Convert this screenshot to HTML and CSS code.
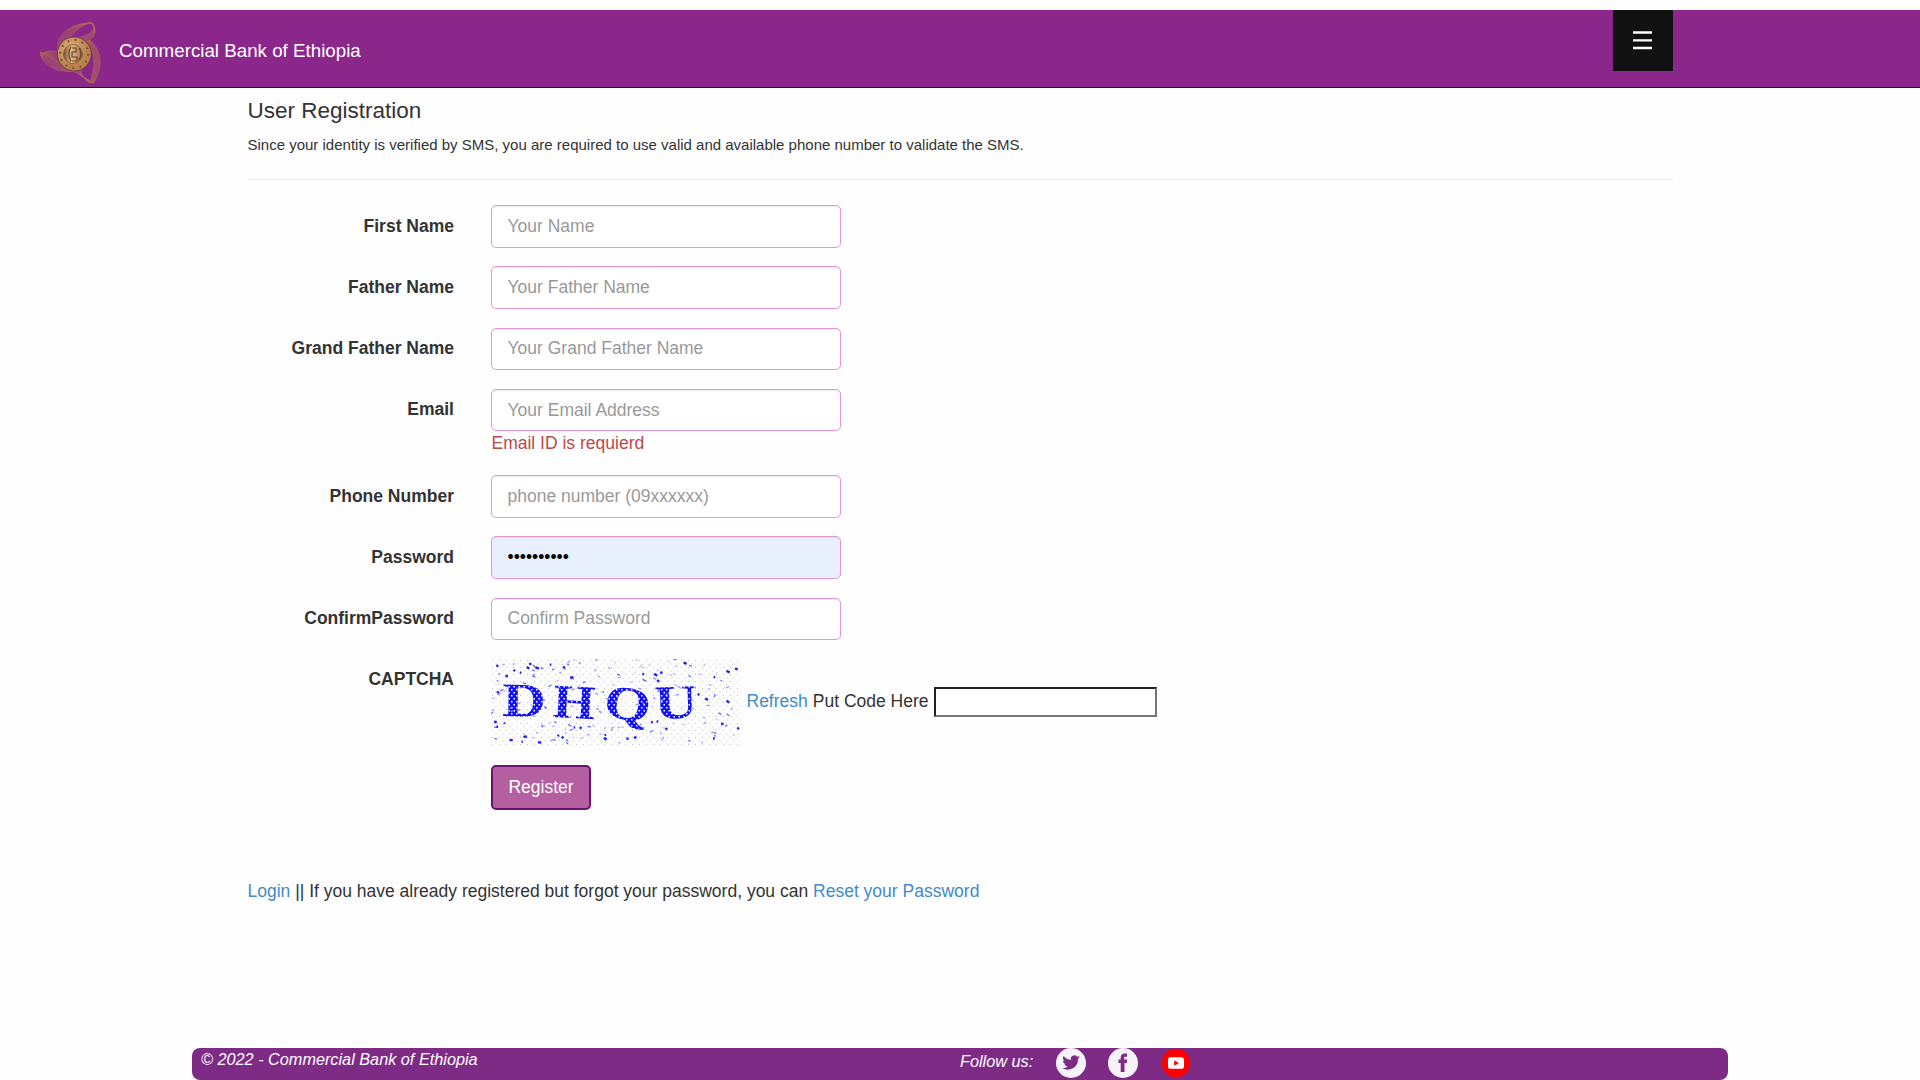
FILE: index.html
```html
<!DOCTYPE html>
<html lang="en">
<head>
<meta charset="utf-8">
<title>User Registration</title>
<link rel="stylesheet" href="styles.css">
</head>
<body>
<header class="navbar">
  <svg class="logo" viewBox="0 0 62 62" aria-hidden="true">
    <defs>
      <radialGradient id="gold" cx=".4" cy=".35"><stop offset="0" stop-color="#e0b47e"/><stop offset="1" stop-color="#b9814c"/></radialGradient>
      <linearGradient id="relief"><stop offset="0" stop-color="#6f4c34"/><stop offset=".4" stop-color="#e5bd87"/><stop offset="1" stop-color="#a36e43"/></linearGradient>
    </defs>
    <g id="petals" fill="none" stroke="#b9774f" stroke-width=".5" opacity=".8"></g>
    <circle cx="35.300" cy="32" r="17" fill="url(#gold)" stroke="#5f3540" stroke-width=".8"/>
    <circle cx="35.300" cy="32" r="14" fill="none" stroke="#7d5335" stroke-width="2.200" stroke-dasharray="1.800 5.530"/>
    <circle cx="34" cy="32" r="9.500" fill="url(#relief)" stroke="#805536" stroke-width=".8"/>
    <path d="M32 24.500q-4 7 0 15M33 26h4v4h-4v5h5v4h-5M40 26q4 6 0 12" fill="none" stroke="#63422d" stroke-width="1.200"/>
  </svg>
  <span class="brand">Commercial Bank of Ethiopia</span>
  <button class="menu" aria-label="Menu"><svg width="19" height="19" viewBox="0 0 19 19"><path d="M0 1.500h19M0 9.300h19M0 17h19" stroke="#fff" stroke-width="2.300"/></svg></button>
</header>
<main class="container">
  <h4 class="title">User Registration</h4>
  <p class="intro">Since your identity is verified by SMS, you are required to use valid and available phone number to validate the SMS.</p>
  <form class="form">
    <div class="row"><label class="label">First Name</label><input class="control" placeholder="Your Name"></div>
    <div class="row"><label class="label">Father Name</label><input class="control" placeholder="Your Father Name"></div>
    <div class="row"><label class="label">Grand Father Name</label><input class="control" placeholder="Your Grand Father Name"></div>
    <div class="row"><label class="label">Email</label><div class="field"><input class="control" placeholder="Your Email Address"><span class="error">Email ID is requierd</span></div></div>
    <div class="row"><label class="label">Phone Number</label><input class="control" placeholder="phone number (09xxxxxx)"></div>
    <div class="row"><label class="label">Password</label><input class="control filled" type="password" value="abcdefghij"></div>
    <div class="row"><label class="label">ConfirmPassword</label><input class="control" type="password" placeholder="Confirm Password"></div>
    <div class="row captcha-row"><label class="label">CAPTCHA</label>
      <div class="captcha">
        <svg class="captcha-image" width="250" height="87" viewBox="0 0 250 87">
          <defs>
            <pattern id="mesh" width="7" height="7" patternUnits="userSpaceOnUse"><path d="M1 1h1v1H1zM4.500 4.500h1v1h-1z" fill="#bfc5bf"/></pattern>
            <pattern id="holes" width="5" height="6" patternUnits="userSpaceOnUse"><path d="M0 0h1.500v1.500H0zM2.500 3h1.500v1.500H2.500z" fill="#fff"/></pattern>
          </defs>
          <rect width="250" height="87" fill="#fdfdfd"/>
          <rect width="250" height="87" fill="url(#mesh)"/>
          <g class="code">
            <text transform="translate(11 57) rotate(1) scale(1.260 1)">D</text>
            <text transform="translate(61 58) rotate(3) scale(1.140 1)">H</text>
            <text transform="translate(111 57) rotate(9) scale(1.260 1)">Q</text>
            <text transform="translate(164 60) rotate(-2) scale(1.240 1)">U</text>
          </g>
          <rect x="10" y="24" width="200" height="48" fill="url(#holes)"/>
          <g id="specks"></g>
        </svg>
        <div class="captcha-entry">
          <a class="link">Refresh</a>
          <span>Put Code Here</span>
        </div>
        <input class="code-input">
      </div>
    </div>
    <div class="row actions"><span class="label"></span><button class="register" type="button">Register</button></div>
  </form>
  <p class="help"><a class="link">Login</a> || If you have already registered but forgot your password, you can <a class="link">Reset your Password</a></p>
</main>
<footer class="footer">
  <span class="copyright">© 2022 - Commercial Bank of Ethiopia</span>
  <div class="social">
    <span class="follow">Follow us:</span>
    <svg class="icon" viewBox="0 0 30 30"><circle cx="15" cy="15" r="15" fill="#f5f3f7"/><path transform="translate(6.300 5.800) scale(.73)" fill="#7e2b86" d="M24 4.600a10 10 0 0 1-2.800.8 5 5 0 0 0 2.100-2.700 10 10 0 0 1-3.100 1.200 4.900 4.900 0 0 0-8.400 4.500A14 14 0 0 1 1.700 3.100a4.900 4.900 0 0 0 1.500 6.600 5 5 0 0 1-2.200-.6 4.900 4.900 0 0 0 3.900 4.900 5 5 0 0 1-2.200.1 4.900 4.900 0 0 0 4.600 3.400A9.900 9.900 0 0 1 0 19.500a14 14 0 0 0 21.500-12.400A10 10 0 0 0 24 4.600z"/></svg>
    <svg class="icon facebook" viewBox="0 0 30 30"><circle cx="15" cy="15" r="15" fill="#f5f3f7"/><path fill="#7e2b86" d="M12.700 24v-9h-2.200v-3.600h2.200V9.500c0-2.800 1.700-4 4.100-4h2.200v3.300h-1.600c-1 0-1.400.5-1.400 1.400v1.200h3.200l-.5 3.600H16.500v9z"/></svg>
    <svg class="icon youtube" viewBox="0 0 30 30"><circle cx="15" cy="15" r="14.300" fill="#f00"/><rect x="7" y="9.300" width="16" height="11.500" rx="2.600" fill="#fff"/><path d="M13.200 12.200l4.800 2.800-4.800 2.800z" fill="#f00"/></svg>
  </div>
</footer>
<script src="page.js"></script>
</body>
</html>
```
FILE: styles.css
```css
* { box-sizing: border-box; }
body { margin: 0; padding-top: 10px; height: 1080px; display: flex; flex-direction: column; overflow: hidden; background: #fefefe; color: #333; font: 17.5px/25px "Liberation Sans", Arial, sans-serif; }
.navbar { height: 78px; flex: none; display: flex; align-items: flex-start; padding-left: 39px; background: #8b278b; border-bottom: 1px solid #080808; }
.logo { width: 62px; height: 62px; margin-top: 12px; }
.brand { margin: 28px 0 0 18px; color: #fff; font-size: 18.75px; line-height: 25px; }
.menu { width: 60px; height: 61px; margin: 0 247px 0 auto; padding: 0 1px 1px 0; border: 0; background: #111; display: grid; place-items: center; }
.container { width: 1425px; margin: 0 auto; flex: 1; }
.title { margin: 10px 0 0; font-size: 22.5px; font-weight: 400; line-height: 25px; }
.intro { margin: 11px 0 0; padding-bottom: 24px; font-size: 15px; line-height: 21px; border-bottom: 1px solid #eee; }
.form { padding-top: 25px; }
.row { display: flex; margin-bottom: 18.75px; }
.label { width: 206.5px; margin-right: 37px; padding-top: 8.5px; text-align: right; font-weight: 700; }
.field { display: flex; flex-direction: column; }
.control { width: 350px; height: 42.5px; padding: 8px 15px 8px 15.5px; border: 1px solid #e796d5; border-radius: 5px; background: #fff; color: #000; font: inherit; box-shadow: inset 0 1px 1px rgba(0,0,0,.075); }
.control::placeholder { color: #999; opacity: 1; }
.filled { background: #e8f0fe; }
.error { color: #b94a48; padding-left: .5px; }
.captcha-row { margin-bottom: 19px; }
.captcha { display: flex; align-items: center; }
.captcha-image { display: block; flex: none; }
.captcha-entry { display: flex; gap: 5px; padding: 0 5px 2px 5.5px; }
.code { fill: #1111fa; font: bold 48px "Liberation Serif", serif; }
.link { color: #428bca; text-decoration: none; }
.code-input { width: 223px; height: 30px; border: 2px inset #767676; background: #fff; }
.register { width: 100px; height: 45px; padding: 0; border: 2px solid #69126e; border-radius: 5px; background: #b45fa0; color: #fff; font: inherit; }
.help { margin: 69px 0 0; }
.footer { width: 1536px; height: 32px; flex: none; margin: 0 auto; display: flex; border-radius: 8px; background: #7e2b86; color: #fff; font-style: italic; font-size: 16.25px; }
.copyright { width: 768px; padding-left: 9px; line-height: 23px; }
.social { display: flex; align-items: flex-start; }
.follow { width: 96px; line-height: 27px; }
.icon { width: 30px; height: 30px; }
.facebook { margin-left: 22px; }
.youtube { margin-left: 23px; }
```
FILE: page.js
```js
const NS = 'http://www.w3.org/2000/svg';
function add(parent, tag, attrs) {
  const node = document.createElementNS(NS, tag);
  Object.entries(attrs).forEach(([k, v]) => node.setAttribute(k, v));
  parent.appendChild(node);
}

// Three fans of nested curves around the coin
const petals = document.getElementById('petals');
for (let i = 0; i < 11; i++) {
  add(petals, 'path', { d: `M${19 + i / 3} 31C${15 + i * 1.2} ${13 + i / 3} ${32 + i} 1 ${51 + i / 4} 1C${59} ${4 + i * 0.7} 55 ${14 + i * 0.3} ${31 + i * 1.6} ${17 + i * 0.3}` });
  add(petals, 'path', { d: `M${37 - i / 2} ${49 + i * 0.1}C${22 + i * 0.6} ${51 - i * 0.7} ${6 + i * 0.8} ${47 - i} 1.500 ${33 - i * 0.3}C${7 + i * 0.5} ${28 + i * 0.7} 14 ${28 + i * 0.9} 22 ${30 + i * 1.3}` });
  add(petals, 'path', { d: `M${51 - i / 3} 18C${63 - i * 0.7} ${28 + i / 3} ${65 - i * 0.8} ${47 - i / 3} ${54.5 - i * 0.4} 61C${48 - i / 2} ${57 - i * 0.2} 40 52 ${31 + i * 1.3} ${48 - i * 0.3}` });
}

// Repeatable ink specks over the captcha
let seed = 41;
const rand = () => (seed = (seed * 16807) % 2147483647) / 2147483647;
for (let i = 0; i < 20; i++) rand();
const specks = document.getElementById('specks');
for (let i = 0; i < 250; i++) {
  const x = rand() * 247, y = rand() * 84;
  const inText = y > 25 && y < 62 && x > 12 && x < 206;
  if (inText && rand() < 0.55) continue;
  const strong = rand() < 0.2 && !inText;
  add(specks, 'path', {
    d: `M${x.toFixed(1)} ${y.toFixed(1)}l${(1 + rand() * 2.5).toFixed(1)} ${(rand() * 4 - 2).toFixed(1)}`,
    stroke: strong ? '#2222ee' : ['#9a9af2', '#6b6bf0', '#d5b5ee'][i % 3],
    'stroke-width': strong ? 2.4 : 1.3
  });
}
```
